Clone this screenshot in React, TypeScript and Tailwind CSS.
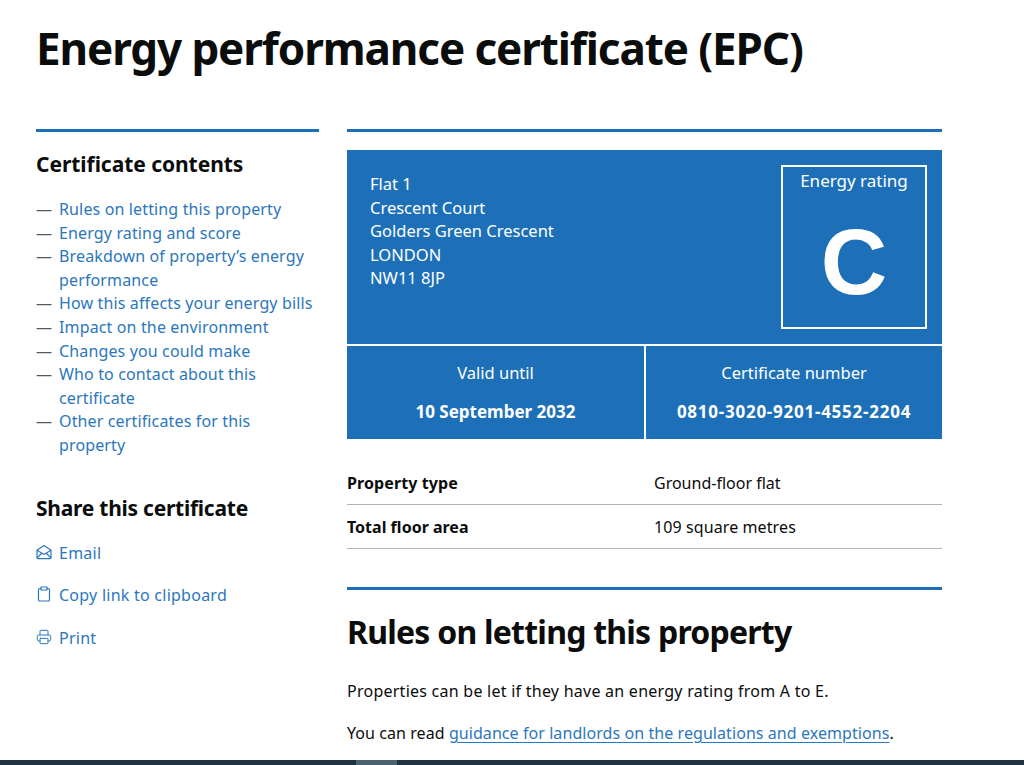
import React from "react";
import { Printer } from "lucide-react";

const contents = [
  "Rules on letting this property",
  "Energy rating and score",
  "Breakdown of property’s energy performance",
  "How this affects your energy bills",
  "Impact on the environment",
  "Changes you could make",
  "Who to contact about this certificate",
  "Other certificates for this property",
];

const address = ["Flat 1", "Crescent Court", "Golders Green Crescent", "LONDON", "NW11 8JP"];

function EmailIcon() {
  return (
    <svg width="16" height="16" viewBox="0 0 16 16" fill="none" stroke="#2b77bd" strokeWidth="1.2" strokeLinejoin="round">
      <path d="M1 6.2 8 1.5l7 4.7v7.6a.8.8 0 0 1-.8.8H1.8a.8.8 0 0 1-.8-.8z" />
      <path d="M1 6.2 8 10.5l7-4.3M1 14l5-5M15 14l-5-5" />
    </svg>
  );
}

function ClipboardIcon() {
  return (
    <svg width="16" height="16" viewBox="0 0 16 16" fill="none" stroke="#2b77bd" strokeWidth="1.2" strokeLinejoin="round">
      <path d="M5 2.5H3.8A1.3 1.3 0 0 0 2.5 3.8v9.9A1.3 1.3 0 0 0 3.8 15h8.4a1.3 1.3 0 0 0 1.3-1.3V3.8a1.3 1.3 0 0 0-1.3-1.3H11" />
      <path d="M5 1h6v3H5z" />
    </svg>
  );
}

export default function App() {
  return (
    <div className="flex flex-col h-[765px] overflow-hidden bg-white text-[#0b0c0c] font-['Noto_Sans',sans-serif]">
      <div className="flex-1 overflow-hidden pl-[36px] pr-[82px]">
        <h1 className="mt-[22px] mb-[55px] text-[44px] leading-[52px] font-bold tracking-[-1.1px]">
          Energy performance certificate (EPC)
        </h1>
        <div className="flex gap-[28px]">
          <aside className="w-[283px] shrink-0 border-t-[3px] border-[#1d70b8]">
            <h2 className="mt-[18px] mb-[20px] text-[21px] leading-[28px] font-bold tracking-[-0.05px]">Certificate contents</h2>
            <ul className="text-[16px] leading-[23.6px] tracking-[0.14px]">
              {contents.map((item) => (
                <li key={item} className="flex">
                  <span className="w-[23px] shrink-0 text-[#505a5f]">—</span>
                  <a className="text-[#2b77bd]">{item}</a>
                </li>
              ))}
            </ul>
            <h2 className="mt-[36px] mb-[19px] text-[21px] leading-[28px] font-bold tracking-[-0.25px]">Share this certificate</h2>
            <div className="flex flex-col gap-[18.5px] text-[16px] leading-[24px] tracking-[0.25px] text-[#2b77bd]">
              <a className="flex items-center gap-[7px]"><span className="-mt-[2px]"><EmailIcon /></span>Email</a>
              <a className="flex items-center gap-[7px]"><span className="-mt-[2px]"><ClipboardIcon /></span>Copy link to clipboard</a>
              <a className="flex items-center gap-[7px]"><span className="-mt-[2px]"><Printer size={16} strokeWidth={1.5} /></span>Print</a>
            </div>
          </aside>
          <main className="w-[595px] shrink-0 border-t-[3px] border-[#1d70b8]">
            <div className="mt-[18px] bg-[#1d70b8] text-white text-[16.5px]">
              <div className="flex justify-between h-[194px] pt-[15px] pr-[15px] pl-[23px]">
                <div className="pt-[7px] leading-[23.6px]">
                  {address.map((line) => <div key={line}>{line}</div>)}
                </div>
                <div className="flex flex-col items-center w-[146px] h-[164px] border-2 border-white">
                  <div className="mt-[2px] leading-[24px] text-[17px]">Energy rating</div>
                  <div className="mt-[14px] text-[92px] leading-[110px] font-bold font-['Liberation_Sans',sans-serif]">C</div>
                </div>
              </div>
              <div className="flex h-[95px] border-t-2 border-white text-center">
                <div className="w-[299px] pt-[15px] border-r-2 border-white">
                  <div className="leading-[24px]">Valid until</div>
                  <div className="mt-[15px] leading-[24px] font-bold text-[17px]">10 September 2032</div>
                </div>
                <div className="flex-1 pt-[15px]">
                  <div className="leading-[24px]">Certificate number</div>
                  <div className="mt-[15px] leading-[24px] font-bold text-[17px] tracking-[0.75px]">0810-3020-9201-4552-2204</div>
                </div>
              </div>
            </div>
            <dl className="mt-[22px] text-[16px] leading-[24px]">
              <div className="flex h-[44px] pt-[10px] border-b border-[#b1b4b6]">
                <dt className="w-[307px] font-bold tracking-[0.1px]">Property type</dt>
                <dd>Ground-floor flat</dd>
              </div>
              <div className="flex h-[44px] pt-[10px] border-b border-[#b1b4b6]">
                <dt className="w-[307px] font-bold">Total floor area</dt>
                <dd className="tracking-[0.1px]">109 square metres</dd>
              </div>
            </dl>
            <div className="mt-[38px] border-t-[3px] border-[#1d70b8]">
              <h2 className="mt-[20px] text-[32px] leading-[44px] font-bold tracking-[-0.77px]">Rules on letting this property</h2>
              <p className="mt-[25px] text-[16px] leading-[24px] tracking-[0.25px]">Properties can be let if they have an energy rating from A to E.</p>
              <p className="mt-[18px] text-[16px] leading-[24px] tracking-[0.07px]">
                You can read <a className="text-[#2b77bd] underline underline-offset-[3px]">guidance for landlords on the regulations and exemptions</a>.
              </p>
            </div>
          </main>
        </div>
      </div>
      <div className="flex h-[5px] shrink-0 bg-[#1f3440]">
        <div className="ml-[356px] w-[41px] bg-[#4d6270]" />
      </div>
    </div>
  );
}
